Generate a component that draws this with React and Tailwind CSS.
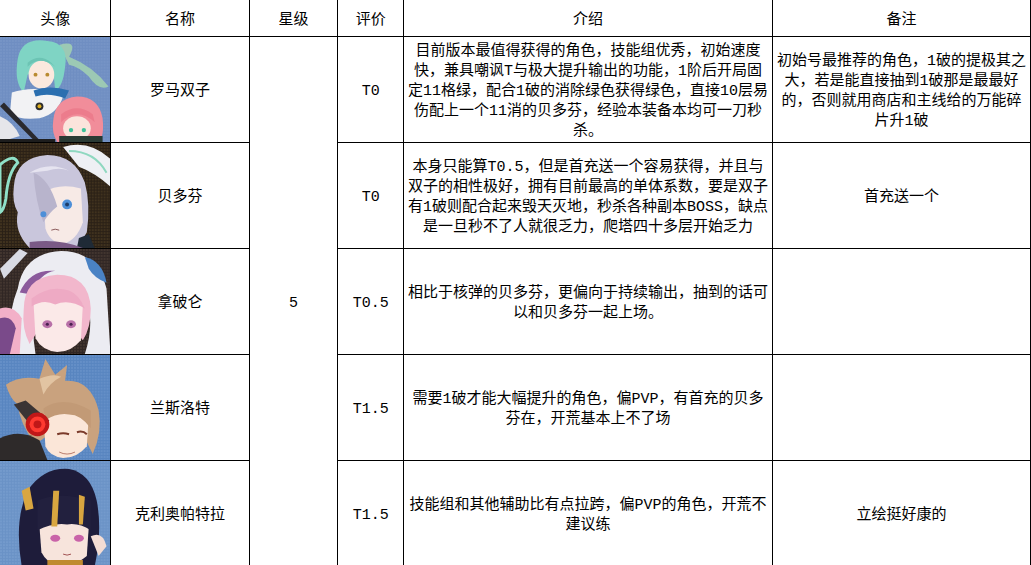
const rows = [
  {
    name: "罗马双子",
    tier: "T0",
    intro: [
      "目前版本最值得获得的角色，技能组优秀，初始速度",
      "快，兼具嘲讽T与极大提升输出的功能，1阶后开局固",
      "定11格绿，配合1破的消除绿色获得绿色，直接10层易",
      "伤配上一个11消的贝多芬，经验本装备本均可一刀秒",
      "杀。",
    ],
    note: [
      "初始号最推荐的角色，1破的提极其之",
      "大，若是能直接抽到1破那是最最好",
      "的，否则就用商店和主线给的万能碎",
      "片升1破",
    ],
  },
  {
    name: "贝多芬",
    tier: "T0",
    intro: [
      "本身只能算T0.5，但是首充送一个容易获得，并且与",
      "双子的相性极好，拥有目前最高的单体系数，要是双子",
      "有1破则配合起来毁天灭地，秒杀各种副本BOSS，缺点",
      "是一旦秒不了人就很乏力，爬塔四十多层开始乏力",
    ],
    note: ["首充送一个"],
  },
  {
    name: "拿破仑",
    tier: "T0.5",
    intro: ["相比于核弹的贝多芬，更偏向于持续输出，抽到的话可", "以和贝多芬一起上场。"],
    note: [],
  },
  {
    name: "兰斯洛特",
    tier: "T1.5",
    intro: ["需要1破才能大幅提升的角色，偏PVP，有首充的贝多", "芬在，开荒基本上不了场"],
    note: [],
  },
  {
    name: "克利奥帕特拉",
    tier: "T1.5",
    intro: ["技能组和其他辅助比有点拉跨，偏PVP的角色，开荒不", "建议练"],
    note: ["立绘挺好康的"],
  },
];

function Dots({ id, color }) {
  return (
    <pattern id={id} width="3" height="3" patternUnits="userSpaceOnUse">
      <rect width="2" height="2" fill={color} />
    </pattern>
  );
}

function RomaAvatar() {
  return (
    <svg viewBox="0 0 112 106" preserveAspectRatio="none" className="block h-full w-full">
      <defs>
        <Dots id="d1" color="#7b98c8" />
      </defs>
      <rect width="112" height="106" fill="#6f8ec2" />
      <rect width="112" height="106" fill="url(#d1)" opacity="0.6" />
      <path d="M60 8 Q80 2 70 20 Q95 30 110 50 Q100 55 90 40 Q80 30 70 28 Z" fill="#9cc9b4" />
      <path d="M18 22 Q22 0 48 4 Q70 6 66 30 Q64 50 56 54 L54 34 Q40 30 28 38 L24 56 Q14 46 18 22 Z" fill="#7fd4c4" />
      <ellipse cx="42" cy="38" rx="13" ry="14" fill="#fbe9de" />
      <path d="M28 30 Q40 18 56 30 L52 26 Q40 16 28 26 Z" fill="#6cc4b4" />
      <circle cx="36" cy="38" r="2" fill="#b98a30" />
      <circle cx="48" cy="38" r="2" fill="#b98a30" />
      <path d="M12 56 Q30 50 50 54 L64 60 Q58 78 40 82 Q20 84 10 78 Z" fill="#f2f2f4" />
      <path d="M34 54 Q50 48 70 54 L66 62 Q50 56 36 60 Z" fill="#2b6fb0" />
      <circle cx="40" cy="70" r="4" fill="#2d2d2d" />
      <circle cx="40" cy="70" r="2" fill="#e0b020" />
      <path d="M0 70 L4 66 L40 104 L36 106 Z" fill="#2a2a2e" />
      <path d="M0 80 Q14 86 20 100 L0 106 Z" fill="#e6e6ea" />
      <path d="M54 84 Q56 62 78 60 Q100 60 104 82 Q106 100 100 106 L58 106 Q52 96 54 84 Z" fill="#f18d9a" />
      <ellipse cx="78" cy="92" rx="14" ry="12" fill="#fbe4dc" />
      <path d="M62 86 Q78 70 96 86 L94 78 Q78 66 62 78 Z" fill="#ec7c8c" />
      <circle cx="72" cy="94" r="2.2" fill="#3fc29a" />
      <circle cx="85" cy="94" r="2.2" fill="#3fc29a" />
      <path d="M60 100 L104 100 L104 106 L60 106 Z" fill="#2a3a34" />
      <rect y="103" width="56" height="3" fill="#1d1d1d" />
    </svg>
  );
}

function BeethovenAvatar() {
  return (
    <svg viewBox="0 0 112 106" preserveAspectRatio="none" className="block h-full w-full">
      <defs>
        <Dots id="d2" color="#4a3a22" />
      </defs>
      <rect width="112" height="106" fill="#2a2016" />
      <rect width="112" height="106" fill="url(#d2)" opacity="0.7" />
      <path d="M0 22 Q14 10 18 20 Q8 30 6 56 Q4 68 0 70 Z" fill="none" stroke="#8fe0c8" strokeWidth="3" />
      <path d="M64 4 Q90 -4 112 16 L112 44 Q96 30 80 24 Z" fill="#eef0f4" />
      <path d="M70 8 Q96 8 108 30" fill="none" stroke="#8fd8c0" strokeWidth="2" />
      <path d="M14 44 Q16 14 48 12 Q76 12 86 40 Q92 62 88 90 L80 104 L60 106 L30 106 Q14 90 18 70 Q12 60 14 44 Z" fill="#c9c6dc" />
      <path d="M30 30 Q50 18 70 28 Q60 24 48 28 Z" fill="#e6e4f0" />
      <path d="M44 50 Q60 40 82 46 L84 80 Q78 98 64 102 Q50 100 46 86 Z" fill="#f7eae6" />
      <path d="M34 30 Q50 36 58 64 Q50 70 44 80 Q36 60 34 30 Z" fill="#b8b4cc" />
      <ellipse cx="68" cy="62" rx="5" ry="5" fill="#4d8fd8" />
      <circle cx="68" cy="62" r="2" fill="#1d3d6a" />
      <ellipse cx="44" cy="72" rx="3" ry="3" fill="#4d8fd8" />
      <path d="M52 88 Q56 86 60 88" stroke="#8a5a5a" strokeWidth="1" fill="none" />
      <path d="M80 96 L90 92 L96 106 L78 106 Z" fill="#1f2a36" />
      <path d="M30 100 Q60 96 84 106 L30 106 Z" fill="#7a5a86" />
    </svg>
  );
}

function NapoleonAvatar() {
  return (
    <svg viewBox="0 0 112 106" preserveAspectRatio="none" className="block h-full w-full">
      <defs>
        <Dots id="d3" color="#4a3c34" />
      </defs>
      <rect width="112" height="106" fill="#302624" />
      <rect width="112" height="106" fill="url(#d3)" opacity="0.7" />
      <path d="M0 20 L20 0 L28 4 L4 30 Z" fill="#d8dae4" />
      <path d="M18 40 Q24 4 62 2 Q98 2 108 40 L112 106 L86 106 Q98 70 84 40 Q62 30 40 46 Q30 70 36 106 L12 106 Q6 70 18 40 Z" fill="#ececf2" />
      <path d="M86 8 Q104 12 108 34 Q96 30 90 20 Z" fill="#4a82c4" />
      <path d="M20 44 Q30 20 56 22 Q40 24 32 46 Z" fill="#8b5a9c" />
      <path d="M24 62 Q24 28 58 26 Q90 26 92 60 Q92 80 84 92 L74 80 L40 80 L30 96 Q22 80 24 62 Z" fill="#f2b7cc" />
      <path d="M34 54 Q58 42 84 56 L82 92 Q72 104 58 104 Q42 102 36 90 Z" fill="#fbe9e8" />
      <path d="M32 50 Q50 36 70 42 Q80 46 86 60 Q70 50 56 56 Q44 50 32 58 Z" fill="#eeaac4" />
      <ellipse cx="48" cy="76" rx="5" ry="4" fill="#b870a8" />
      <ellipse cx="72" cy="76" rx="5" ry="4" fill="#b870a8" />
      <circle cx="48" cy="76" r="1.6" fill="#4a2050" />
      <circle cx="72" cy="76" r="1.6" fill="#4a2050" />
      <path d="M0 60 Q14 56 22 70 L20 106 L0 106 Z" fill="#f3b0c8" />
      <path d="M0 70 Q12 66 16 80 L10 106 L0 106 Z" fill="#7a4a8a" />
    </svg>
  );
}

function LancelotAvatar() {
  return (
    <svg viewBox="0 0 112 106" preserveAspectRatio="none" className="block h-full w-full">
      <defs>
        <Dots id="d4" color="#6d96cc" />
      </defs>
      <rect width="112" height="106" fill="#5885c0" />
      <rect width="112" height="106" fill="url(#d4)" opacity="0.6" />
      <path d="M6 30 Q20 20 40 24 L46 4 L56 20 L68 10 L66 26 Q92 24 100 56 Q104 78 94 100 L84 80 L50 80 L36 90 Q20 70 18 50 Q10 44 6 30 Z" fill="#c9a27e" />
      <path d="M40 24 Q54 18 62 22 Q50 28 44 40 Z" fill="#e2c4a2" />
      <path d="M44 60 Q66 50 90 62 L88 92 Q78 104 64 104 Q50 102 46 92 Z" fill="#fbe6d8" />
      <path d="M44 54 Q64 40 92 56 L92 74 Q82 60 70 60 Q58 58 46 66 Z" fill="#c29a76" />
      <path d="M58 80 Q64 78 70 80" stroke="#7a3a2a" strokeWidth="2" fill="none" />
      <path d="M78 78 Q84 76 88 80" stroke="#7a3a2a" strokeWidth="2" fill="none" />
      <path d="M14 50 L26 46 L50 66 L40 82 Z" fill="#3a3434" />
      <circle cx="38" cy="70" r="12" fill="#c01818" />
      <circle cx="38" cy="70" r="8" fill="#ff3a30" />
      <circle cx="38" cy="70" r="4" fill="#c01818" />
      <path d="M0 84 Q20 74 40 86 L48 106 L0 106 Z" fill="#2e2a2a" />
      <path d="M60 98 Q68 102 76 98" stroke="#b87a6a" strokeWidth="1" fill="none" />
    </svg>
  );
}

function CleopatraAvatar() {
  return (
    <svg viewBox="0 0 112 106" preserveAspectRatio="none" className="block h-full w-full">
      <defs>
        <Dots id="d5" color="#7aa0d0" />
      </defs>
      <rect width="112" height="106" fill="#6a92c6" />
      <rect width="112" height="106" fill="url(#d5)" opacity="0.6" />
      <path d="M22 106 Q14 60 28 30 Q44 6 70 8 Q92 12 98 40 Q104 70 96 106 Z" fill="#1e1c3a" />
      <path d="M40 66 Q64 58 90 66 L88 96 Q76 106 62 106 Q48 104 42 92 Z" fill="#f7e4dc" />
      <path d="M38 70 L38 40 Q60 30 92 40 L92 70 Q80 62 68 64 Q54 62 38 70 Z" fill="#22203e" />
      <path d="M54 30 L60 30 L58 66 L52 66 Z" fill="#d9a640" />
      <path d="M80 34 L86 36 L84 64 L80 64 Z" fill="#d9a640" />
      <path d="M22 30 L30 26 L34 48 L26 50 Z" fill="#d9a640" />
      <ellipse cx="56" cy="78" rx="5" ry="3.5" fill="#c963a8" />
      <ellipse cx="80" cy="78" rx="5" ry="3.5" fill="#c963a8" />
      <path d="M64 94 Q68 96 72 94" stroke="#a05050" strokeWidth="1" fill="none" />
      <path d="M92 76 Q104 70 108 86 L100 96 Z" fill="#f4ddd4" />
      <path d="M48 100 L84 100 L84 106 L48 106 Z" fill="#c08a30" />
    </svg>
  );
}

const avatars = [RomaAvatar, BeethovenAvatar, NapoleonAvatar, LancelotAvatar, CleopatraAvatar];

function Lines({ lines }) {
  return lines.map((line, i) => (
    <div key={i} className="whitespace-nowrap">
      {line}
    </div>
  ));
}

export default function App() {
  const cell = "border border-black pt-[5px] text-center align-middle";
  return (
    <div className="h-[565px] w-[1031px] overflow-hidden bg-white">
      <table className="-ml-px -mt-px table-fixed border-collapse font-['Liberation_Mono','Noto_Sans_CJK_SC',monospace] text-[15px] leading-[20px] text-black">
        <colgroup>
          <col className="w-[113px]" />
          <col className="w-[140px]" />
          <col className="w-[90px]" />
          <col className="w-[66px]" />
          <col className="w-[365px]" />
          <col className="w-[256px]" />
        </colgroup>
        <thead>
          <tr className="h-[37px]">
            <th className={`${cell} font-normal`}>头像</th>
            <th className={`${cell} font-normal`}>名称</th>
            <th className={`${cell} font-normal`}>星级</th>
            <th className={`${cell} font-normal`}>评价</th>
            <th className={`${cell} font-normal`}>介绍</th>
            <th className={`${cell} font-normal`}>备注</th>
          </tr>
        </thead>
        <tbody>
          {rows.map((row, i) => {
            const Avatar = avatars[i];
            return (
              <tr key={row.name} className="h-[106px]">
                <td className="h-[106px] border border-black p-0 align-middle">
                  <div className="h-[105px] w-full">
                    <Avatar />
                  </div>
                </td>
                <td className={cell}>{row.name}</td>
                {i === 0 && (
                  <td rowSpan={5} className={cell}>
                    5
                  </td>
                )}
                <td className={cell}>{row.tier}</td>
                <td className={`${cell} px-1`}>
                  <Lines lines={row.intro} />
                </td>
                <td className={`${cell} px-1`}>
                  <Lines lines={row.note} />
                </td>
              </tr>
            );
          })}
        </tbody>
      </table>
    </div>
  );
}
